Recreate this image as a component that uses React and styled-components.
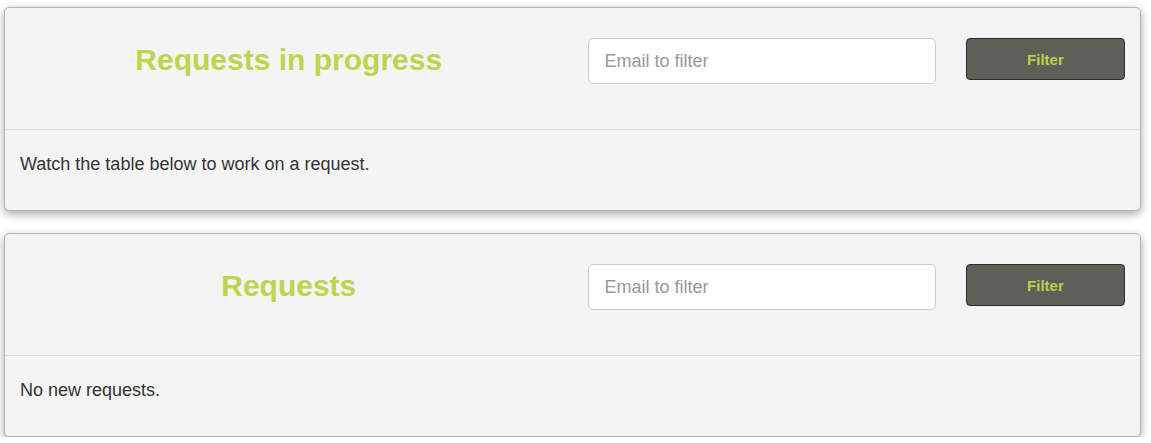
import styled, { createGlobalStyle } from 'styled-components';

const GlobalStyle = createGlobalStyle`
  body {
    margin: 0;
    background: #ffffff;
    font-family: "Liberation Sans", Arial, sans-serif;
    color: #333333;
  }
  * {
    box-sizing: border-box;
  }
`;

const Page = styled.div`
  display: flex;
  flex-direction: column;
  gap: 22px;
  padding: 7px 10px 0 4px;
`;

const Panel = styled.div`
  background: #f4f4f4;
  border: 1px solid #b4b4b4;
  border-radius: 5px;
  box-shadow: 0 3px 8px rgba(0, 0, 0, 0.35);
`;

const Header = styled.div`
  display: grid;
  grid-template-columns: 6fr 4fr 2fr;
  align-items: start;
  padding: 30px 0 45px;
  border-bottom: 1px solid #e0e0e0;
`;

const Title = styled.h2`
  margin: 0;
  padding: 0 15px 2px;
  height: 46px;
  display: flex;
  align-items: center;
  justify-content: center;
  font-size: 30px;
  font-weight: 700;
  color: #bed44f;
`;

const Cell = styled.div`
  padding: 0 15px;
`;

const Input = styled.input`
  width: 100%;
  height: 46px;
  padding: 10px 16px;
  font-family: "Liberation Sans", Arial, sans-serif;
  font-size: 18px;
  color: #555555;
  background: #ffffff;
  border: 1px solid #cccccc;
  border-radius: 5px;
  outline: none;

  &::placeholder {
    color: #999999;
  }
`;

const Button = styled.button`
  width: 100%;
  height: 42px;
  font-family: "Liberation Sans", Arial, sans-serif;
  font-size: 15px;
  font-weight: 700;
  color: #b8d14b;
  background: #5e5f58;
  border: 1px solid #2e2e2a;
  border-radius: 4px;
  cursor: pointer;
`;

const Body = styled.div`
  padding: 22px 15px 24px;
`;

const Text = styled.p`
  margin: 0 0 10px;
  font-size: 18px;
  line-height: 24px;
`;

const sections = [
  { title: 'Requests in progress', text: 'Watch the table below to work on a request.' },
  { title: 'Requests', text: 'No new requests.' },
];

const App = () => {
  return (
    <>
      <GlobalStyle />
      <Page>
        {sections.map((section, index) => (
          <Panel key={index}>
            <Header>
              <Title>{section.title}</Title>
              <Cell>
                <Input type="text" placeholder="Email to filter" />
              </Cell>
              <Cell>
                <Button>Filter</Button>
              </Cell>
            </Header>
            <Body>
              <Text>{section.text}</Text>
            </Body>
          </Panel>
        ))}
      </Page>
    </>
  );
};

export default App;
